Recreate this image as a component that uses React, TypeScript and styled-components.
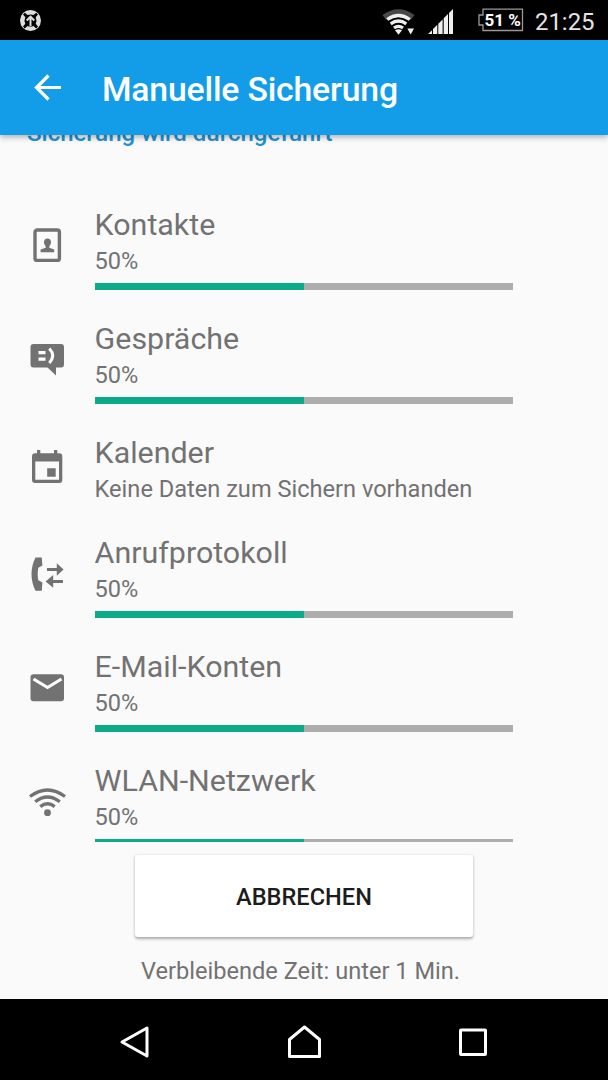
import React from 'react';
import styled, { createGlobalStyle } from 'styled-components';

const GlobalStyle = createGlobalStyle`
  * { box-sizing: border-box; }
  body { margin: 0; background: #fafafa; font-family: Roboto, "Liberation Sans", sans-serif; }
  svg { display: block; flex: none; }
`;

const Screen = styled.div`
  width: 608px;
  height: 1080px;
  display: flex;
  flex-direction: column;
  overflow: hidden;
  background: #fafafa;
  color: #727272;
`;

const StatusBar = styled.header`
  flex: none;
  height: 40px;
  padding: 0 13px 0 19px;
  background: #000;
  display: flex;
  align-items: center;
  justify-content: space-between;
`;

const StatusGroup = styled.div`
  display: flex;
  align-items: center;
  height: 40px;
`;

const Signals = styled.div`
  display: flex;
  gap: 12px;
  margin: 3px 24px 0 0;
`;

const Battery = styled.div`
  display: grid;
  grid-template: 24px / 46px;
  margin-right: 11px;
  & > * { grid-area: 1 / 1; }
`;

const BatteryText = styled.span`
  padding-left: 6.5px;
  font-size: 17px;
  font-weight: 700;
  line-height: 25px;
  white-space: nowrap;
  color: #fff;
`;

const Clock = styled.time`
  width: 60px;
  font-size: 23.9px;
  line-height: 40px;
  padding-top: 3px;
  color: #e4e4e4;
  white-space: nowrap;
`;

const AppBar = styled.div`
  flex: none;
  height: 95px;
  padding-left: 33px;
  display: flex;
  align-items: center;
  gap: 40px;
  background: #139de9;
  box-shadow: 0 2px 6px rgba(0, 0, 0, 0.32);
  position: relative;
  z-index: 1;
`;

const Title = styled.h1`
  margin: 5px 0 0;
  font-size: 33.8px;
  font-weight: 500;
  letter-spacing: -0.2px;
  line-height: 40px;
  color: #fff;
  white-space: nowrap;
`;

const Scroller = styled.main`
  flex: none;
  height: 707px;
  overflow: hidden;
`;

const Section = styled.h2`
  margin: -20px 0 56px;
  padding-left: 27px;
  font-size: 24px;
  font-weight: 500;
  line-height: 36px;
  color: #2392d2;
  white-space: nowrap;
`;

const Row = styled.section<{ $short: boolean }>`
  height: ${p => (p.$short ? 100 : 114)}px;
  padding-left: 27px;
  display: flex;
  gap: 27.6px;
`;

const IconSlot = styled.div<{ $short: boolean }>`
  width: 40px;
  padding-top: ${p => (p.$short ? 12 : 19)}px;
`;

const Details = styled.div`
  width: 418.7px;
`;

const Name = styled.div`
  font-size: 30.4px;
  line-height: 36px;
  white-space: nowrap;
`;

const State = styled.div`
  font-size: 23.6px;
  line-height: 36px;
  white-space: nowrap;
`;

const Track = styled.div`
  margin-top: 4px;
  height: 6.5px;
  background: #adadad;
`;

const Fill = styled.div`
  height: 100%;
  background: #0cab88;
`;

const Footer = styled.footer`
  flex: 1;
  padding-top: 13px;
  display: flex;
  flex-direction: column;
  align-items: center;
`;

const CancelButton = styled.button`
  width: 338px;
  height: 82px;
  padding: 2px 0 0;
  border: 0;
  border-radius: 3px;
  background: #fff;
  box-shadow: 0 1.5px 3px rgba(0, 0, 0, 0.32);
  font: 500 23.6px Roboto, "Liberation Sans", sans-serif;
  color: #1c1c1c;
`;

const Remaining = styled.p`
  margin: 16px 0 0;
  padding-right: 7px;
  font-size: 23.6px;
  line-height: 36px;
`;

const NavBar = styled.nav`
  flex: none;
  height: 81px;
  padding: 4px 116px 0;
  background: #000;
  display: flex;
  align-items: center;
  justify-content: space-between;
`;

const ContactIcon = () => (
  <svg width="40" height="40" viewBox="0 1 40 40">
    <rect x="8" y="5" width="24.4" height="30.4" rx="2.2" fill="none" stroke="#727272" strokeWidth="3.4" />
    <path fill="#727272" d="M20.500 13.400c2.200 0 3.500 1.500 3.500 3.600 0 2-1 3.400-1.700 4.300v1.400l4.900 1.800v2.700H13.600v-2.700l5.100-1.800v-1.400C18 20.400 17 19 17 17c0-2.100 1.300-3.600 3.500-3.600z" />
  </svg>
);

const ChatIcon = () => (
  <svg width="40" height="40" viewBox="0 0 40 40">
    <path fill="#727272" d="M6.500 4H34q3 0 3 3v17.500q0 3-3 3h-5v8L20.500 27.500h-14q-3 0-3-3V7q0-3 3-3z" />
    <path fill="#fff" d="M11.500 11h7v3.200h-7zM11.500 17.500h7v3.200h-7z" />
    <path fill="none" stroke="#fff" strokeWidth="3" d="M22.300 8.500Q29 15.500 22.300 23" />
  </svg>
);

const CalendarIcon = () => (
  <svg width="40" height="40" viewBox="0 0 40 40">
    <path fill="#727272" fillRule="evenodd" d="M10 3h3.300v3.300H27V3h3.300v3.300h2q3 0 3 3v23.500q0 3.200-3 3.200H8.200q-3.200 0-3.200-3.200V9.300q0-3 3.200-3H10zM8.300 14.500v18.300H32V14.500zM20.200 21.200h8.500v8.500h-8.500z" />
  </svg>
);

const CallIcon = () => (
  <svg width="40" height="40" viewBox="0 0 40 40">
    <path fill="#727272" d="M8.500 3.500h6.300l.6 8-4.100 2.200c-.8 4.500-.8 8.500 0 12.600l4.100 2.200-.6 8.200H8.500C3.200 26.500 3.200 13.500 8.500 3.500zM20 14h9.800V9.200l6.800 6.300-6.800 6.300V17H20zM36 29H26.200v4.700L18.600 27.400l7.600-6.500v5H36z" />
  </svg>
);

const MailIcon = () => (
  <svg width="40" height="40" viewBox="0 0 40 40">
    <rect x="3.500" y="6.300" width="33.500" height="27" rx="3" fill="#727272" />
    <path fill="none" stroke="#fff" strokeWidth="3.200" d="M6.500 11l14 8.500 14-8.500" />
  </svg>
);

const WifiIcon = () => (
  <svg width="40" height="40" viewBox="0 0 40 40">
    <g fill="none" stroke="#727272" strokeWidth="3.300">
      <path d="M3 14.500Q20.500 1.500 38 14.500" />
      <path d="M8.200 19.800Q20.500 10.300 32.800 19.800" />
      <path d="M13.300 24.600Q20.500 19 27.700 24.600" />
    </g>
    <circle cx="20.500" cy="30.700" r="3.400" fill="#727272" />
  </svg>
);

const rows: { name: string; Icon: React.FC; percent?: number }[] = [
  { name: 'Kontakte', Icon: ContactIcon, percent: 50 },
  { name: 'Gespräche', Icon: ChatIcon, percent: 50 },
  { name: 'Kalender', Icon: CalendarIcon },
  { name: 'Anrufprotokoll', Icon: CallIcon, percent: 50 },
  { name: 'E-Mail-Konten', Icon: MailIcon, percent: 50 },
  { name: 'WLAN-Netzwerk', Icon: WifiIcon, percent: 50 },
];

export default function App() {
  return (
    <Screen>
      <GlobalStyle />
      <StatusBar>
        <svg width="23" height="23" viewBox="0 0 23 23">
          <circle cx="11.500" cy="11.500" r="10.500" fill="#dedede" />
          <path fill="#000" d="M4 5.500l1.800-1.800 2.700 2.300q3-1 6 0l2.700-2.300L19 5.500l-2.300 2.800q1.500 3.300 0 6.500l2.300 2.800-1.800 1.800-2.700-2.300q-3 1-6 0l-2.700 2.300L4 17.600l2.300-2.800q-1.500-3.200 0-6.500z" />
          <path fill="none" stroke="#dedede" strokeWidth="2" d="M11.500 17V8M7.700 11.500l3.800-3.800 3.800 3.800" />
        </svg>
        <StatusGroup>
          <Signals>
            <svg width="34" height="28" viewBox="0 0 34 28">
              <path fill="#484848" d="M.5 7Q16.500-4.500 32.500 7l-3.500 4.700Q16.500 3 4 11.700z" />
              <g fill="none" stroke="#efefef" strokeWidth="3.300">
                <path d="M5.200 11.500Q16.500 3.500 27.800 11.500" />
                <path d="M8.700 15.800Q16.500 10.300 24.300 15.800" />
                <path d="M12 20Q16.500 16.800 21 20" />
              </g>
              <path fill="#efefef" d="M13 22.300q3.500-2.200 7 0l-3.500 4.500zM25.300 20.500H32l-3.300 6z" />
            </svg>
            <svg width="26" height="28" viewBox="0 0 26 28">
              <path fill="#efefef" d="M0 26l4-3.800V26zM5 26v-5l4.300-4.200V26zM10.300 26V15.700l4.300-4.300V26zM15.700 26V10.200l4.300-4.300V26zM21 26V4.900L25 .9V26z" />
            </svg>
          </Signals>
          <Battery>
            <svg width="46" height="24" viewBox="0 0 46 24">
              <path fill="none" stroke="#999" strokeWidth="1.300" d="M5 1.200H44.500V22.500H5V17H1V7H5z" />
            </svg>
            <BatteryText>51 %</BatteryText>
          </Battery>
          <Clock>21:25</Clock>
        </StatusGroup>
      </StatusBar>
      <AppBar>
        <svg width="29" height="29" viewBox="0 0 29 29">
          <path fill="none" stroke="#fff" strokeWidth="3.200" d="M28 14.500H4M15.500 2.500L3.500 14.500l12 12" />
        </svg>
        <Title>Manuelle Sicherung</Title>
      </AppBar>
      <Scroller>
        <Section>Sicherung wird durchgeführt</Section>
        {rows.map(({ name, Icon, percent }) => (
          <Row key={name} $short={percent === undefined}>
            <IconSlot $short={percent === undefined}>
              <Icon />
            </IconSlot>
            <Details>
              <Name>{name}</Name>
              <State>{percent === undefined ? 'Keine Daten zum Sichern vorhanden' : `${percent}%`}</State>
              {percent !== undefined && (
                <Track>
                  <Fill style={{ width: `${percent}%` }} />
                </Track>
              )}
            </Details>
          </Row>
        ))}
      </Scroller>
      <Footer>
        <CancelButton>ABBRECHEN</CancelButton>
        <Remaining>Verbleibende Zeit: unter 1 Min.</Remaining>
      </Footer>
      <NavBar>
        <svg width="38" height="38" viewBox="0 0 38 38">
          <path fill="none" stroke="#fff" strokeWidth="3" strokeLinejoin="round" d="M31 5v28L6 19z" />
        </svg>
        <svg width="38" height="38" viewBox="0 0 38 38">
          <path fill="none" stroke="#fff" strokeWidth="3" strokeLinejoin="round" d="M4.500 33.500V16.500L19.500 4l15 12.500v17z" />
        </svg>
        <svg width="38" height="38" viewBox="0 0 38 38">
          <rect x="6.500" y="7" width="25" height="24.500" rx=".5" fill="none" stroke="#fff" strokeWidth="3" strokeLinejoin="round" />
        </svg>
      </NavBar>
    </Screen>
  );
}
